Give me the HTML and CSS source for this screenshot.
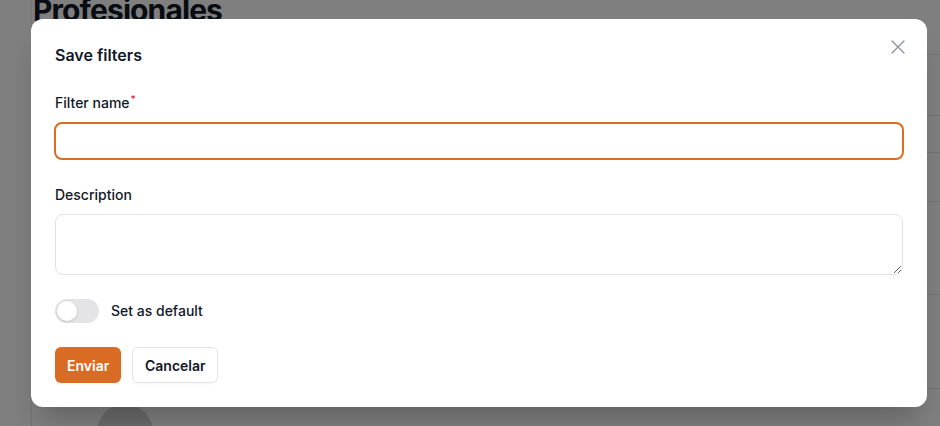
FILE: index.html
```html
<!DOCTYPE html>
<html lang="es">
<head>
<meta charset="utf-8">
<title>Profesionales</title>
<link rel="stylesheet" href="styles.css">
</head>
<body>
<div class="page">
  <main class="main">
    <h1 class="page-title">Profesionales</h1>
    <div class="rows">
      <div class="row row-a"></div>
      <div class="row row-b"></div>
      <div class="row row-c"></div>
      <div class="row row-d"></div>
      <div class="row row-e"></div>
      <div class="row row-f"></div>
    </div>
    <div class="avatar-wrap"><div class="avatar"></div></div>
  </main>
</div>

<div class="overlay"></div>

<div class="modal" role="dialog" aria-labelledby="modal-title">
  <button class="close" type="button" aria-label="Close">
    <svg width="16" height="16" viewBox="0 0 16 16" fill="none" stroke="currentColor" stroke-width="1.3" stroke-linecap="round"><path d="M2 2l12 12M14 2L2 14"/></svg>
  </button>
  <h2 class="modal-title" id="modal-title">Save filters</h2>
  <form class="form">
    <div class="field">
      <label class="label" for="fname">Filter name<span class="req">*</span></label>
      <input class="input" id="fname" type="text">
    </div>
    <div class="field">
      <label class="label" for="fdesc">Description</label>
      <textarea class="textarea" id="fdesc"></textarea>
    </div>
    <div class="toggle-row">
      <span class="toggle"><span class="knob"></span></span>
      <span class="toggle-label">Set as default</span>
    </div>
    <div class="actions">
      <button class="btn btn-primary" type="button">Enviar</button>
      <button class="btn btn-secondary" type="button">Cancelar</button>
    </div>
  </form>
</div>
</body>
</html>
```

FILE: styles.css
```css
* { box-sizing: border-box; }
html, body { margin: 0; padding: 0; }
body {
  width: 940px;
  height: 426px;
  overflow: hidden;
  background: #ffffff;
  font-family: Inter, "Noto Sans", sans-serif;
  color: #111827;
  position: relative;
}

.page { display: flex; height: 426px; overflow: hidden; }
.main {
  margin-left: 31px;
  flex: 1;
  border-left: 1px solid #e5e7eb;
  display: flex;
  flex-direction: column;
  overflow: hidden;
}
.page-title {
  margin: -8px 0 0 1px;
  font-size: 30px;
  line-height: 36px;
  font-weight: 700;
  letter-spacing: -0.03em;
  color: #111827;
}
.rows { display: flex; flex-direction: column; margin-top: 26px; }
.row { border-top: 1px solid #e5e7eb; }
.row-a { height: 61px; }
.row-b { height: 37px; }
.row-c { height: 49px; }
.row-d { height: 93px; }
.row-e { height: 94px; }
.row-f { height: 10px; }
.avatar-wrap { padding: 6px 0 0 65px; }
.avatar { width: 56px; height: 56px; border-radius: 50%; background: #d6d6d6; }

.overlay {
  position: absolute;
  inset: 0;
  background: rgba(0, 0, 0, 0.5);
}

.modal {
  position: absolute;
  left: 31px;
  top: 19px;
  width: 896px;
  height: 388px;
  background: #ffffff;
  border-radius: 12px;
  padding: 24px;
  box-shadow: 0 20px 30px -10px rgba(0, 0, 0, 0.25);
}
.close {
  position: absolute;
  top: 20px;
  right: 21px;
  width: 16px;
  height: 16px;
  padding: 0;
  border: 0;
  background: none;
  color: #8b8f99;
  display: flex;
}
.modal-title {
  margin: 0 0 25px;
  font-size: 16px;
  line-height: 24px;
  font-weight: 600;
  color: #111827;
}
.form { display: flex; flex-direction: column; gap: 24px; }
.field { display: flex; flex-direction: column; }
.label {
  font-size: 14px;
  line-height: 20px;
  font-weight: 500;
  color: #111827;
  padding-top: 1px;
  margin-bottom: 9px;
}
.req {
  color: #e11d48;
  font-size: 10px;
  vertical-align: top;
  line-height: 12px;
  margin-left: 1px;
}
.input {
  height: 38px;
  margin: 0 -1px;
  border: 2px solid #d96d22;
  border-radius: 8px;
  font: inherit;
  outline: none;
  background: #fff;
}
.textarea {
  height: 61px;
  border: 1px solid #e2e2e4;
  border-radius: 8px;
  font: inherit;
  resize: vertical;
  outline: none;
}
.toggle-row { display: flex; align-items: center; gap: 12px; }
.toggle {
  width: 44px;
  height: 24px;
  border-radius: 12px;
  background: #e4e4e7;
  padding: 2px;
  display: flex;
}
.knob {
  width: 20px;
  height: 20px;
  border-radius: 50%;
  background: #fff;
  box-shadow: 0 1px 3px rgba(0, 0, 0, 0.15);
}
.toggle-label { font-size: 14px; line-height: 20px; font-weight: 500; color: #111827; }
.actions { display: flex; gap: 11px; }
.btn {
  height: 36px;
  border-radius: 6px;
  font-family: inherit;
  font-size: 14px;
  font-weight: 600;
  padding: 0 12px;
  cursor: pointer;
}
.btn-primary { background: #d96c22; color: #fff; border: 0; width: 66px; }
.btn-secondary { background: #fff; color: #111827; border: 1px solid #e4e4e7; width: 86px; box-shadow: 0 1px 2px rgba(0, 0, 0, 0.04); }
```
